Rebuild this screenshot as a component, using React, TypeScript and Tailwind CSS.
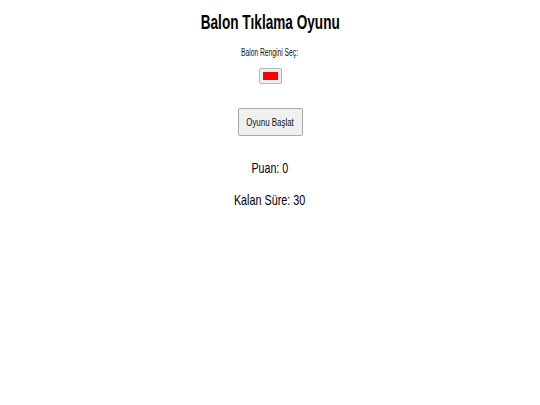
import React, { useState } from 'react';

export default function App() {
  const [color] = useState('#ff0000');
  const [score] = useState(0);
  const [timeLeft] = useState(30);

  return (
    <div className="min-h-[405px] bg-white text-[#000] flex flex-col items-center" style={{ fontFamily: '"Liberation Sans", Arial, sans-serif' }}>
      <h1 className="mt-[10px] h-[24px] text-[20px] leading-[24px] font-bold">
        <span className="inline-block scale-x-[0.68]">Balon Tıklama Oyunu</span>
      </h1>
      <label className="mt-[13px] h-[12px] text-[10px] leading-[12px] text-[#111]">
        <span className="inline-block scale-x-[0.67]">Balon Rengini Seç:</span>
      </label>
      <div className="mt-[9px] w-[23px] h-[16px] px-[3px] py-[3px] border border-[#b4b4b4] rounded-[2px] bg-[#efefef] flex">
        <div className="flex-1" style={{ backgroundColor: color }} />
      </div>
      <button className="mt-[24px] w-[65px] h-[28px] text-[11px] bg-[#f0f0f0] border border-[#a8a8a8] rounded-[2px] whitespace-nowrap text-[#111] flex items-center justify-center">
        <span className="inline-block shrink-0 scale-x-[0.72]">Oyunu Başlat</span>
      </button>
      <p className="mt-[23px] h-[18px] text-[15px] leading-[18px] whitespace-nowrap">
        <span className="inline-block scale-x-[0.71]">Puan: {score}</span>
      </p>
      <p className="mt-[14px] h-[18px] text-[15px] leading-[18px] whitespace-nowrap">
        <span className="inline-block scale-x-[0.72]">Kalan Süre: {timeLeft}</span>
      </p>
    </div>
  );
}
